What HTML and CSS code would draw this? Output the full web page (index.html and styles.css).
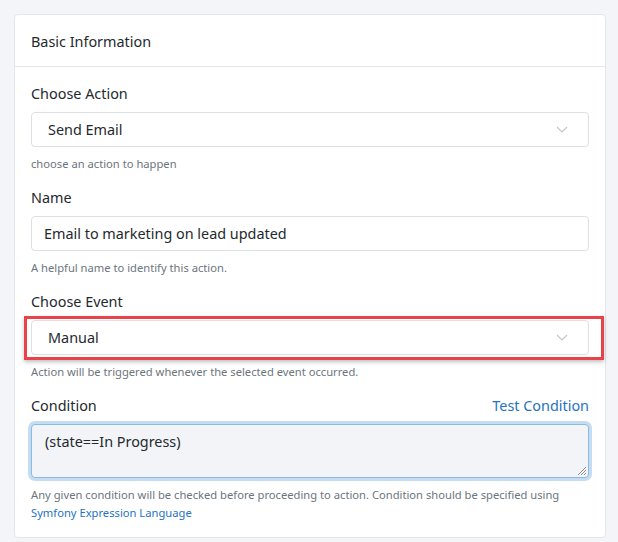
FILE: index.html
```html
<!DOCTYPE html>
<html lang="en">

<head>
    <meta charset="UTF-8">
    <meta name="viewport" content="width=device-width, initial-scale=1.0">
    <title>Workflow Action</title>
    <link rel="stylesheet" href="styles.css">
</head>

<body>
    <div class="card">
        <div class="card-header">Basic Information</div>

        <div class="card-body">
            <div class="form-group">
                <label class="form-label">Choose Action</label>
                <div class="select">
                    <span>Send Email</span>
                    <svg class="chevron" width="12" height="7" viewBox="0 0 12 7">
                        <path d="M1 1l5 5 5-5" fill="none" stroke="#c3c7cc" stroke-width="1.2" />
                    </svg>
                </div>
                <div class="help">choose an action to happen</div>
            </div>

            <div class="form-group">
                <label class="form-label">Name</label>
                <div class="input">Email to marketing on lead updated</div>
                <div class="help">A helpful name to identify this action.</div>
            </div>

            <div class="form-group">
                <label class="form-label">Choose Event</label>
                <div class="highlight-wrap">
                    <div class="select">
                        <span>Manual</span>
                        <svg class="chevron" width="12" height="7" viewBox="0 0 12 7">
                            <path d="M1 1l5 5 5-5" fill="none" stroke="#c3c7cc" stroke-width="1.2" />
                        </svg>
                    </div>
                    <div class="highlight"></div>
                </div>
                <div class="help">Action will be triggered whenever the selected event occurred.</div>
            </div>

            <div class="form-group last">
                <div class="label-row">
                    <label class="form-label">Condition</label>
                    <a class="link" href="#">Test Condition</a>
                </div>
                <div class="textarea">
                    (state==In Progress)
                    <svg class="grip" width="12" height="12" viewBox="0 0 12 12">
                        <path d="M11 3L3 11M11 6L6 11M11 9L9 11" stroke="#8a8d92" stroke-width="1" />
                    </svg>
                </div>
                <div class="help">Any given condition will be checked before proceeding to action. Condition should be specified using <a class="link" href="#">Symfony Expression Language</a></div>
            </div>
        </div>
    </div>
</body>

</html>
```

FILE: styles.css
```css
body {
    margin: 0;
    padding: 14px 12px 7px 14px;
    background-color: #f4f5f8;
    font-family: "Noto Sans", "Open Sans", sans-serif;
    color: #24292e;
}

.card {
    background-color: white;
    border: 1px solid #e4e6ea;
    border-radius: 4px;
}

.card-header {
    padding: 16px 16px 13px;
    font-size: 14.4px;
    line-height: 22px;
    border-bottom: 1px solid #e4e6ea;
}

.card-body {
    padding: 16px 16px 15px;
}

.form-group {
    margin-bottom: 14px;
}

.form-group.last {
    margin-bottom: 0;
}

.form-label {
    display: block;
    font-size: 14.4px;
    line-height: 22px;
    margin-bottom: 7px;
}

.label-row {
    display: flex;
    justify-content: space-between;
    align-items: baseline;
}

.label-row .link {
    font-size: 14.4px;
    line-height: 22px;
}

.select,
.input {
    box-sizing: border-box;
    height: 35px;
    border: 1px solid #dcdfe3;
    border-radius: 4px;
    font-size: 14.4px;
    display: flex;
    align-items: center;
}

.select {
    padding: 0 20px 0 16px;
    justify-content: space-between;
}

.input {
    padding: 0 12px;
}

.highlight-wrap {
    position: relative;
}

/* red marker drawn around the event select */
.highlight {
    position: absolute;
    left: -7px;
    right: -15px;
    top: -4px;
    bottom: -5px;
    border: 3px solid #e8434b;
    box-shadow: 0 2px 4px rgba(0, 0, 0, 0.25);
}

.textarea {
    box-sizing: border-box;
    position: relative;
    height: 54px;
    padding: 6px 13px;
    font-size: 14.4px;
    line-height: 22px;
    background-color: #f3f4f8;
    border: 1px solid #86bde6;
    border-radius: 4px;
    box-shadow: 0 0 0 3px #c6ddf1;
}

.grip {
    position: absolute;
    right: 1px;
    bottom: 1px;
}

.help {
    margin-top: 8px;
    font-size: 11.2px;
    line-height: 18px;
    color: #6c757d;
}

.link {
    color: #1f73bf;
    text-decoration: none;
}
```
